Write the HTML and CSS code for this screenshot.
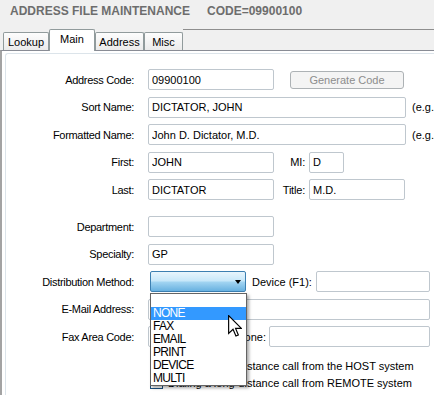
FILE: index.html
```html
<!DOCTYPE html>
<html lang="en">
<head>
    <meta charset="UTF-8">
    <meta name="viewport" content="width=device-width, initial-scale=1.0">
    <title>Address File Maintenance</title>
    <link rel="stylesheet" href="styles.css">
</head>
<body>
<div class="window">
    <div class="title">ADDRESS FILE MAINTENANCE<span class="code">CODE=09900100</span></div>
    <div class="tabs">
        <div class="tab t-lookup">Lookup</div>
        <div class="tab t-main active">Main</div>
        <div class="tab t-address">Address</div>
        <div class="tab t-misc">Misc</div>
        <div class="tab-fill"></div>
    </div>
    <div class="panel">
        <div class="inner">
            <div class="form">
                <div class="row">
                    <label class="lbl">Address Code:</label>
                    <input class="field w-short" type="text" value="09900100">
                    <button class="gen" disabled>Generate Code</button>
                </div>
                <div class="row">
                    <label class="lbl">Sort Name:</label>
                    <input class="field w-long" type="text" value="DICTATOR, JOHN">
                    <span class="hint">(e.g.</span>
                </div>
                <div class="row">
                    <label class="lbl">Formatted Name:</label>
                    <input class="field w-long" type="text" value="John D. Dictator, M.D.">
                    <span class="hint">(e.g.</span>
                </div>
                <div class="row">
                    <label class="lbl">First:</label>
                    <input class="field w-short" type="text" value="JOHN">
                    <label class="lbl2">MI:</label>
                    <input class="field w-mi" type="text" value="D">
                </div>
                <div class="row">
                    <label class="lbl">Last:</label>
                    <input class="field w-short" type="text" value="DICTATOR">
                    <label class="lbl2">Title:</label>
                    <input class="field w-title" type="text" value="M.D.">
                </div>
                <div class="row spaced">
                    <label class="lbl">Department:</label>
                    <input class="field w-short" type="text" value="">
                </div>
                <div class="row">
                    <label class="lbl">Specialty:</label>
                    <input class="field w-short" type="text" value="GP">
                </div>
                <div class="row">
                    <label class="lbl">Distribution Method:</label>
                    <div class="combo-wrap">
                        <div class="combo"><span class="arrow"></span></div>
                        <ul class="dropdown">
                            <li>&nbsp;</li>
                            <li class="sel">NONE</li>
                            <li>FAX</li>
                            <li>EMAIL</li>
                            <li>PRINT</li>
                            <li>DEVICE</li>
                            <li>MULTI</li>
                            <svg class="cursor" width="14" height="22" viewBox="0 0 12 19">
                                <path d="M0.5 0.5 V16 L4.3 12.4 L6.8 18.2 L8.9 17.3 L6.5 11.6 H11.5 Z" fill="#fff" stroke="#000" stroke-width="1"/>
                            </svg>
                        </ul>
                    </div>
                    <label class="lbl-dev">Device (F1):</label>
                    <input class="field w-dev" type="text" value="">
                </div>
                <div class="row">
                    <label class="lbl">E-Mail Address:</label>
                    <input class="field w-mail" type="text" value="">
                </div>
                <div class="row">
                    <label class="lbl">Fax Area Code:</label>
                    <input class="field w-area" type="text" value="">
                    <label class="lbl-phone">Phone:</label>
                    <input class="field w-phone" type="text" value="">
                </div>
                <div class="checks">
                    <div class="check"><span class="box"></span>Dialing a long-distance call from the HOST system</div>
                    <div class="check"><span class="box"></span>Dialing a long-distance call from REMOTE system</div>
                </div>
            </div>
        </div>
    </div>
</div>
</body>
</html>
```

FILE: styles.css
```css
html, body {
    overflow: hidden;
}
body {
    margin: 0;
    font-family: "Liberation Sans", Arial, sans-serif;
    font-size: 11px;
    color: #000;
    background: #f0f0f0;
}
.window {
    width: 434px;
}
.title {
    height: 29px;
    box-sizing: border-box;
    padding: 4px 0 0 10px;
    font-size: 12px;
    line-height: 15px;
    font-weight: bold;
    color: #6d6d6d;
    white-space: nowrap;
}
.title .code {
    margin-left: 17px;
}
.tabs {
    display: flex;
    align-items: flex-end;
    height: 21px;
    padding-left: 3px;
}
.tab {
    height: 18px;
    box-sizing: border-box;
    padding-top: 1px;
    border: 1px solid #919b9c;
    border-bottom: none;
    border-radius: 2px 2px 0 0;
    background: linear-gradient(#fdfdfd, #ebebeb);
    text-align: center;
    line-height: 16px;
}
.tab.active {
    height: 22px;
    margin-bottom: -1px;
    background: #fff;
    position: relative;
    z-index: 1;
}
.t-lookup { width: 46px; }
.t-main { width: 46px; }
.t-address { width: 49px; }
.t-misc { width: 39px; }
.tab-fill {
    flex: 1;
    align-self: flex-start;
    border-top: 1px solid #8e8e8e;
}
.panel {
    border-top: 1px solid #898c95;
    border-left: 2px solid #a3a3a3;
    background: #fff;
    height: 400px;
}
.inner {
    margin: 2px 0 0 3px;
    border-top: 1px solid #dce4ea;
    border-left: 1px solid #dce4ea;
    border-radius: 3px 0 0 0;
    padding-top: 15px;
    height: 380px;
}
.form {
    display: flex;
    flex-direction: column;
    gap: 6.5px;
}
.row {
    display: flex;
    align-items: center;
    height: 21px;
    white-space: nowrap;
}
.row > * {
    flex-shrink: 0;
}
.row.spaced {
    margin-top: 9.5px;
}
.lbl {
    width: 128px;
    margin-right: 14px;
    text-align: right;
    letter-spacing: -0.3px;
}
.lbl2 {
    width: 31px;
    margin-right: 4px;
    text-align: right;
    letter-spacing: -0.2px;
}
.field {
    height: 21px;
    box-sizing: border-box;
    margin: 0;
    padding: 0 3px;
    border: 1px solid #bfc7ce;
    border-radius: 2px;
    font-family: "Liberation Sans", Arial, sans-serif;
    font-size: 11px;
    color: #000;
    background: #fff;
}
.w-short { width: 126px; }
.w-long { width: 258px; }
.w-mi { width: 35px; }
.w-title { width: 96px; }
.w-dev { width: 114px; }
.w-mail { width: 282px; }
.w-area { width: 42px; }
.w-phone { width: 161px; }
.gen {
    width: 114px;
    height: 18px;
    margin-left: 16px;
    padding: 0;
    border: 1px solid #adb2b5;
    border-radius: 3px;
    background: #f4f4f4;
    color: #8d8d8d;
    font-family: "Liberation Sans", Arial, sans-serif;
    font-size: 11px;
}
.hint {
    margin-left: 6px;
}
.combo-wrap {
    position: relative;
    margin-left: 2px;
}
.combo {
    width: 96px;
    height: 21px;
    box-sizing: border-box;
    border: 1px solid #3c7fb1;
    border-radius: 2px;
    background: linear-gradient(#e8f5fd, #c6e7f9 48%, #a3d5f2 52%, #68b1e0);
    display: flex;
    align-items: center;
    justify-content: flex-end;
    padding-right: 4px;
}
.arrow {
    width: 0;
    height: 0;
    border-left: 3.5px solid transparent;
    border-right: 3.5px solid transparent;
    border-top: 4px solid #000;
}
.dropdown {
    position: absolute;
    left: 0;
    top: 22px;
    z-index: 5;
    width: 97px;
    box-sizing: border-box;
    margin: 0;
    padding: 0;
    list-style: none;
    border: 1px solid #646464;
    background: #fff;
    box-shadow: 2px 2px 3px rgba(0, 0, 0, 0.35);
}
.dropdown li {
    height: 13px;
    padding-left: 2px;
    font-size: 12px;
    line-height: 13px;
    letter-spacing: -0.7px;
}
.dropdown li.sel {
    background: #3399ff;
    color: #fff;
}
.cursor {
    position: absolute;
    left: 77px;
    top: 21px;
}
.lbl-dev {
    margin-left: 6px;
    margin-right: 4px;
}
.lbl-phone {
    width: 76px;
    text-align: right;
    margin-right: 3px;
}
.checks {
    margin-top: 3.5px;
    padding-left: 144px;
}
.check {
    display: flex;
    align-items: center;
    height: 17px;
    white-space: nowrap;
}
.box {
    width: 13px;
    height: 13px;
    box-sizing: border-box;
    margin-right: 5px;
    border: 1px solid #1c5180;
    background: #fff;
}
```
